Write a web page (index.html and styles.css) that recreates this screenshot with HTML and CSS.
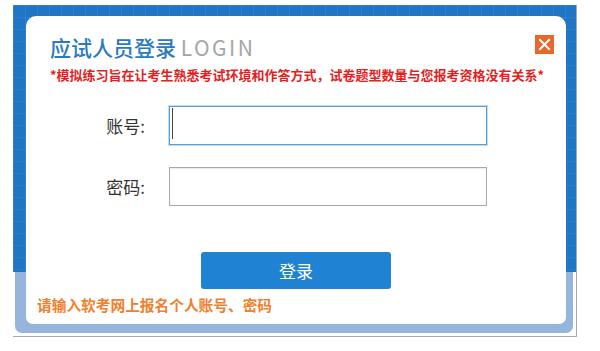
FILE: index.html
```html
<!DOCTYPE html>
<html lang="zh-CN">
<head>
<meta charset="utf-8">
<title>应试人员登录</title>
<link rel="stylesheet" href="styles.css">
</head>
<body>
<div class="frame">
  <div class="shell">
    <div class="panel">
      <div class="head">
        <h1 class="title">应试人员登录 <span class="en">LOGIN</span></h1>
        <span class="close"><svg width="19" height="19" viewBox="0 0 19 19"><path d="M5 5 L14 14 M14 5 L5 14" stroke="#fff" stroke-width="2" stroke-linecap="square"/></svg></span>
      </div>
      <p class="note">*模拟练习旨在让考生熟悉考试环境和作答方式，试卷题型数量与您报考资格没有关系*</p>
      <form class="form">
        <div class="row">
          <label class="label">账号:</label>
          <div class="field focus"><input class="input" type="text"><span class="caret"></span></div>
        </div>
        <div class="row">
          <label class="label">密码:</label>
          <div class="field"><input class="input" type="password"></div>
        </div>
        <button class="btn" type="button">登录</button>
      </form>
      <p class="hint">请输入软考网上报名个人账号、密码</p>
    </div>
  </div>
</div>
</body>
</html>
```
FILE: styles.css
```css
body {
  margin: 0;
  padding-top: 5px;
  background: #fff;
  font-family: "Noto Sans CJK SC", "Noto Sans", sans-serif;
}
.frame {
  margin-left: 13px;
  width: 563px;
  height: 331px;
  border-right: 1px solid #a9a9a9;
  border-bottom: 1px solid #a9a9a9;
  background:
    repeating-linear-gradient(90deg, rgba(255,255,255,0.08) 0 1px, transparent 1px 12px) 0 0 / 100% 267px no-repeat,
    repeating-linear-gradient(180deg, rgba(255,255,255,0.06) 0 1px, transparent 1px 12px) 0 0 / 100% 267px no-repeat,
    linear-gradient(#1e76c5, #1e76c5) 0 0 / 100% 267px no-repeat;
}
.shell {
  box-sizing: border-box;
  height: 328px;
  margin: 0 3px 0 2px;
  padding: 11px 7px 0 11px;
  background: linear-gradient(transparent 267px, #96b5dc 267px);
  border-radius: 0 0 7px 7px;
}
.panel {
  width: 540px;
  height: 308px;
  background: #fff;
  border-radius: 10px 10px 7px 7px;
}
.head {
  display: flex;
  justify-content: space-between;
  align-items: flex-start;
  padding: 16px 12px 0 24px;
}
.title {
  margin: 0;
  font-size: 21px;
  line-height: 30px;
  font-weight: 500;
  color: #2a7abf;
}
.title .en {
  font-weight: normal;
  color: #a6a6a6;
  letter-spacing: 2.5px;
}
.close {
  display: block;
  width: 19px;
  height: 19px;
  margin-top: 3px;
  background: #e8672a;
}
.close svg { display: block; }
.note {
  margin: 4px 0 0 24px;
  font-size: 13px;
  line-height: 18px;
  font-weight: bold;
  color: #e41e1e;
  white-space: nowrap;
}
.form {
  margin: 22px 0 0;
  display: flex;
  flex-direction: column;
  gap: 22px;
}
.row {
  display: flex;
  align-items: center;
  gap: 24px;
}
.label {
  flex: 0 0 119px;
  text-align: right;
  font-size: 17px;
  color: #333;
}
.field {
  position: relative;
  width: 318px;
  height: 39px;
}
.input {
  box-sizing: border-box;
  width: 100%;
  height: 100%;
  margin: 0;
  border: 1px solid #a8a8a8;
  box-shadow: inset 0 1px 1px rgba(0,0,0,0.08);
  outline: none;
  background: #fff;
}
.focus .input {
  border-color: #5a9ad6;
  box-shadow: 0 0 0 1px rgba(90,154,214,0.35);
}
.caret {
  position: absolute;
  left: 3px;
  top: 2px;
  width: 1px;
  height: 31px;
  background: #444;
}
.btn {
  display: block;
  width: 190px;
  height: 37px;
  margin: 24px auto 0;
  border: none;
  border-radius: 3px;
  background: #1f82d2;
  color: #fff;
  font-family: inherit;
  font-size: 17px;
}
.hint {
  margin: 6px 0 0 11px;
  font-size: 14.7px;
  line-height: 20px;
  font-weight: bold;
  color: #f0802c;
}
```
